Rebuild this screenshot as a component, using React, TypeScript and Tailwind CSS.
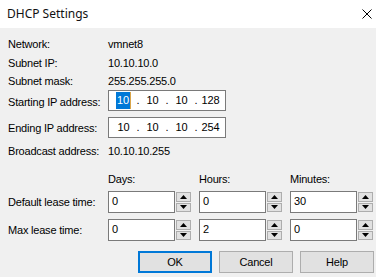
import React from 'react';

const Arrow = ({ up }: { up?: boolean }) => (
  <svg width="7" height="4" viewBox="0 0 7 4">
    <path d={up ? 'M0 4 L3.5 0 L7 4 Z' : 'M0 0 L7 0 L3.5 4 Z'} fill="#000" />
  </svg>
);

const SpinBox = ({ value }: { value: string }) => (
  <div className="flex h-[22px] w-[83px] gap-[1px]">
    <div className="flex h-full w-[67px] items-start border border-[#7a7a7a] bg-white pl-[3px] pt-[3px] leading-[13px]">
      {value}
    </div>
    <div className="flex h-full w-[15px] flex-col gap-[1px] py-[1px]">
      <div className="flex flex-1 items-center justify-center border border-[#adadad] bg-[#e1e1e1]">
        <Arrow up />
      </div>
      <div className="flex flex-1 items-center justify-center border border-[#adadad] bg-[#e1e1e1]">
        <Arrow />
      </div>
    </div>
  </div>
);

const IpBox = ({ parts, selected }: { parts: string[]; selected?: boolean }) => (
  <div className="flex h-[21px] w-[118px] items-center border border-[#7a7a7a] bg-white pl-[3px]">
    {parts.map((p, i) => (
      <React.Fragment key={i}>
        {i > 0 && <span className="w-[6px] text-center">.</span>}
        <span className="flex w-[23px] justify-center">
          {selected && i === 0 ? (
            <span className="flex items-center">
              <span className="inline-block h-[17px] bg-[#0078d7] px-[1px] leading-[17px] text-white">{p}</span>
              <span className="inline-block h-[17px] w-[1px] bg-[#d9a54a]" />
            </span>
          ) : (
            p
          )}
        </span>
      </React.Fragment>
    ))}
  </div>
);

const Row = ({ label, value, h }: { label: string; value: string; h: string }) => (
  <div className={`flex items-center ${h}`}>
    <span className="w-[100px]">{label}</span>
    <span>{value}</span>
  </div>
);

export default function App() {
  return (
    <div className="h-[277px] w-[376px] overflow-hidden bg-[#f0f0f0] font-['Liberation_Sans',Arial,sans-serif] text-[11px] tracking-[-0.2px] text-black">
      {/* title bar */}
      <div className="flex h-[28px] items-center justify-between bg-white pl-[7px] pr-[2px]">
        <span className="font-['Noto_Sans',sans-serif] text-[12px] tracking-normal text-[#111]">DHCP Settings</span>
        <svg width="12" height="12" viewBox="0 0 12 12" className="mr-[1px]">
          <path d="M1.5 1.5 L10.5 10.5 M10.5 1.5 L1.5 10.5" stroke="#000" strokeWidth="1" />
        </svg>
      </div>

      <div className="flex flex-col pl-[8px] pt-[7px]">
        <Row label="Network:" value="vmnet8" h="h-[19px]" />
        <Row label="Subnet IP:" value="10.10.10.0" h="h-[19px]" />
        <Row label="Subnet mask:" value="255.255.255.0" h="h-[17px]" />

        <div className="flex h-[21px] items-center">
          <span className="w-[100px] pt-[3px]">Starting IP address:</span>
          <IpBox parts={['10', '10', '10', '128']} selected />
        </div>
        <div className="mt-[6px] flex h-[21px] items-center">
          <span className="w-[100px] pt-[2px]">Ending IP address:</span>
          <IpBox parts={['10', '10', '10', '254']} />
        </div>

        <Row label="Broadcast address:" value="10.10.10.255" h="h-[27px]" />

        <div className="flex h-[26px] pl-[100px] pt-[8px] leading-[13px]">
          <span className="w-[91px]">Days:</span>
          <span className="w-[91px]">Hours:</span>
          <span>Minutes:</span>
        </div>

        <div className="flex h-[22px] items-center">
          <span className="w-[100px]">Default lease time:</span>
          <div className="flex gap-[8px]">
            <SpinBox value="0" />
            <SpinBox value="0" />
            <SpinBox value="30" />
          </div>
        </div>
        <div className="mt-[6px] flex h-[22px] items-center">
          <span className="w-[100px]">Max lease time:</span>
          <div className="flex gap-[8px]">
            <SpinBox value="0" />
            <SpinBox value="2" />
            <SpinBox value="0" />
          </div>
        </div>

        <div className="ml-[130px] mt-[10px] flex gap-[7px]">
          <button className="h-[22px] w-[74px] border-2 border-[#0078d7] bg-[#e1e1e1]">OK</button>
          <button className="h-[22px] w-[74px] border border-[#adadad] bg-[#e1e1e1]">Cancel</button>
          <button className="h-[22px] w-[74px] border border-[#adadad] bg-[#e1e1e1]">Help</button>
        </div>
      </div>
    </div>
  );
}
